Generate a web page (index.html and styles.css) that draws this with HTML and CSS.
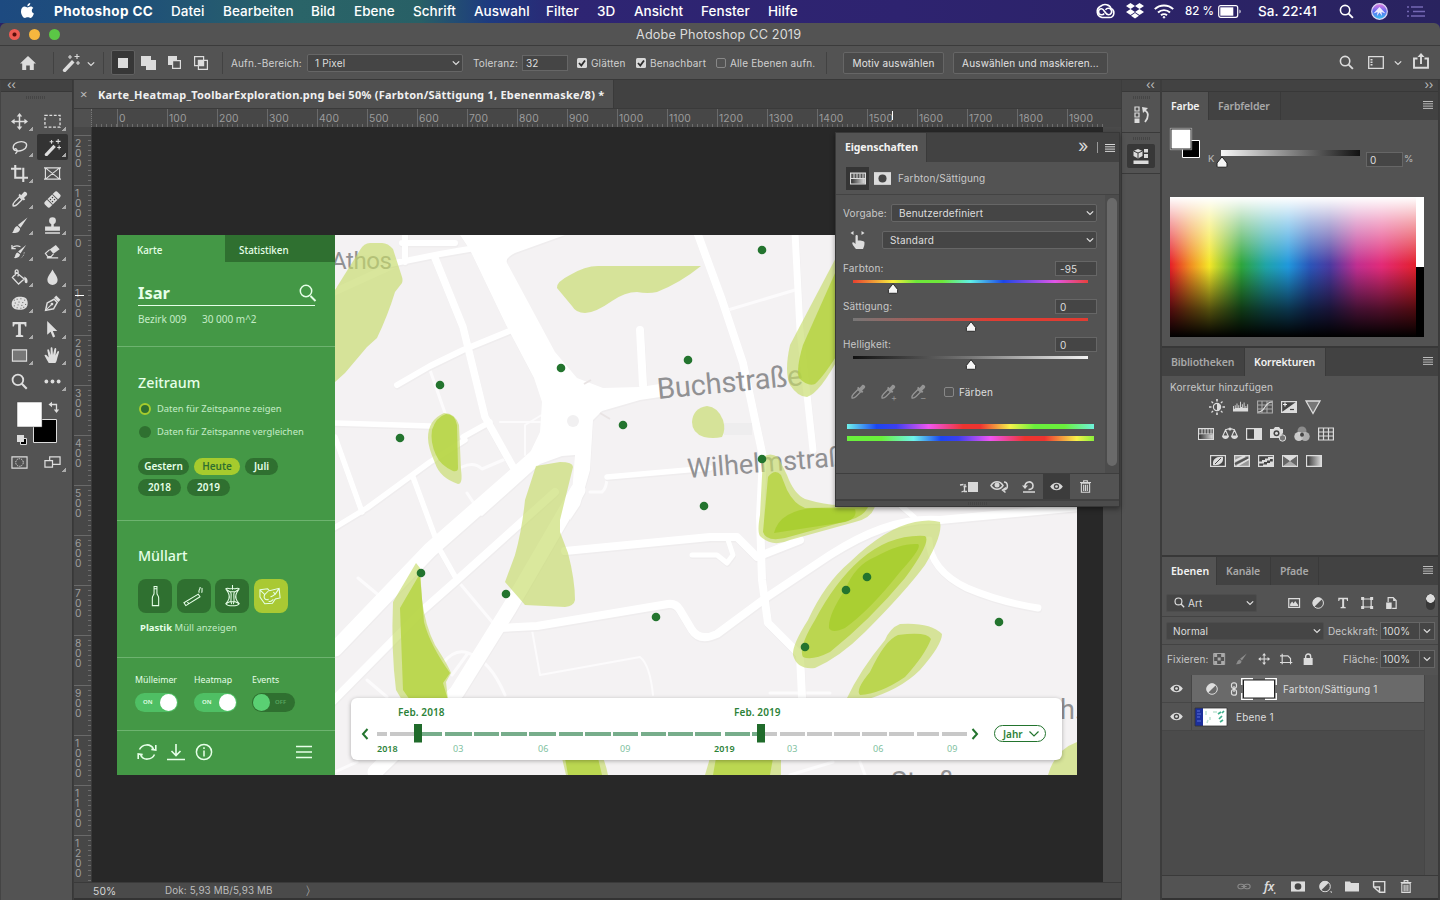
FILE: index.html
```html
<!DOCTYPE html>
<html lang="de">
<head>
<meta charset="utf-8">
<title>Adobe Photoshop CC 2019</title>
<link rel="stylesheet" href="styles.css">
</head>
<body>
<svg class="defs" aria-hidden="true">
  <defs>
    <linearGradient id="gBW" x1="0" x2="1"><stop offset="0" stop-color="#333"/><stop offset="1" stop-color="#ddd"/></linearGradient>
    <symbol id="i-chev" viewBox="0 0 8 8"><path d="M.8 2.400 4 5.400l3.200-3" fill="none" stroke="currentColor" stroke-width="1.300"/></symbol>
    <symbol id="i-menu" viewBox="0 0 10 8"><path d="M0 .5h10M0 2.800h10M0 5.100h10M0 7.400h10" stroke="currentColor" stroke-width="1"/></symbol>
    <symbol id="i-search" viewBox="0 0 16 16"><circle cx="6.500" cy="6.500" r="5" fill="none" stroke="currentColor" stroke-width="1.700"/><path d="m10.200 10.200 4.600 4.600" stroke="currentColor" stroke-width="2"/></symbol>
    <symbol id="i-move" viewBox="0 0 16 16"><path d="M8 2v12M2 8h12" stroke="currentColor" stroke-width="1.400"/><path d="m8 0 2.600 3.400H5.400zM8 16l2.600-3.400H5.400zM0 8l3.400-2.600v5.200zM16 8l-3.400-2.600v5.200z"/></symbol>
    <symbol id="i-wand" viewBox="0 0 18 18"><path d="m1 15.500 9-9.500 2.500 2.500-9 9.500c-1.500.8-3.500-1-2.500-2.500z"/><path d="M8 1v4M6 3h4M15 0v5M12.500 2.500h5M16 7v4M14 9h4" stroke="currentColor" stroke-width="1.100"/></symbol>
    <symbol id="i-marquee" viewBox="0 0 18 16"><rect x="1" y="1.500" width="16" height="12.500" fill="none" stroke="currentColor" stroke-width="1.400" stroke-dasharray="3 1.700"/></symbol>
    <symbol id="i-lasso" viewBox="0 0 18 18"><path d="M4 12c-3-2-2-7 3-8.500s10-.5 9.500 3.500-7 7-12 5c-2-1 0-2.500 1.500-1s0 3.500-1.500 4.500" fill="none" stroke="currentColor" stroke-width="1.400"/></symbol>
    <symbol id="i-crop" viewBox="0 0 18 18"><path d="M0 4h11M13 3v12M4.500 0v13.500H18M13 15v3" fill="none" stroke="currentColor" stroke-width="2.200"/></symbol>
    <symbol id="i-frame" viewBox="0 0 18 16"><path d="M1.500 2h15v12h-15zM1.500 2l15 12M16.500 2l-15 12M0 2h18M0 14h18" fill="none" stroke="currentColor" stroke-width="1.200"/></symbol>
    <symbol id="i-dropper" viewBox="0 0 16 16"><path d="M2 14c-.5-2 .5-3 1.500-4L8 5.500 10.500 8 6 12.500c-1 1-2 2-4 1.500z" fill="none" stroke="currentColor" stroke-width="1.300"/><path d="m7 4 1.300-1.300 1.200 1.200L12 1.200c1.500-1.500 4.300 1 2.800 2.800L12.200 6.500l1.200 1.200L12 9z"/></symbol>
    <symbol id="i-heal" viewBox="0 0 18 18"><g transform="rotate(-45 9 9)"><rect x="-.5" y="5" width="19" height="8" rx="2.500"/><path d="M5.200 5v8M12.800 5v8" stroke="#535353"/><circle cx="7.500" cy="7.500" r=".8" fill="#444"/><circle cx="10.500" cy="7.500" r=".8" fill="#444"/><circle cx="7.500" cy="10.500" r=".8" fill="#444"/><circle cx="10.500" cy="10.500" r=".8" fill="#444"/></g></symbol>
    <symbol id="i-brush" viewBox="0 0 16 16"><path d="M15.500.5 9 10 6.500 7.500zM6 8.500 8.500 11c0 3-3 4.500-7.500 4 2-1.500 1.500-5.500 5-6.500z"/></symbol>
    <symbol id="i-stamp" viewBox="0 0 16 16"><circle cx="8" cy="3.500" r="3.200"/><path d="M6.800 5h2.400v4H15v4H1V9h5.800zM1 14.300h14v1.400H1z"/></symbol>
    <symbol id="i-hist" viewBox="0 0 18 16"><path d="M16 1 10 10 7.500 8zM7 9l2.500 2c0 3-3 4.500-6.500 4 2-1.500 1-5 4-6z"/><path d="M1 4c4-3 7-2 9-1M1 1v4h4" fill="none" stroke="currentColor" stroke-width="1.300"/><path d="M14 9c-.5 4-2 5-4 6" fill="none" stroke="currentColor" stroke-dasharray="1 1.500"/></symbol>
    <symbol id="i-eraser" viewBox="0 0 18 16"><path d="m6 6 6.500-5 4 4.500-6.500 5z"/><path d="m6 6-4.500 4 2.500 3.500h3.500l2.500-3M3 14.800h12" fill="none" stroke="currentColor" stroke-width="1.300"/></symbol>
    <symbol id="i-bucket" viewBox="0 0 18 18"><path d="m6 4 8 6.500-6 5.500-6.500-7zM4.500 7V2.500c0-2 3-2 3 0V8" fill="none" stroke="currentColor" stroke-width="1.400"/><path d="M14 8c2.500 1 4 3 3.500 6-1 2-3 1-3-1z"/></symbol>
    <symbol id="i-drop" viewBox="0 0 16 16"><path d="M8 .5c2 4 4.800 6.500 4.800 9.800a4.800 4.800 0 0 1-9.600 0C3.200 7 6 4.500 8 .5z"/></symbol>
    <symbol id="i-sponge" viewBox="0 0 18 16"><path d="M4 2.500c2-2 8-2 11-.5s3.500 7 1.500 10-9 3.500-13 1.500S0 5 4 2.500z"/><path d="M3 4.500h1M6 3.500h1M10 3h1M14 4.500h1M4 7.500h1M8 6.500h1M12 7h1M3 10.500h1M7 9.500h1M11 10h1M15 9h1M6 12.500h1M10 13h1M13 12h1" stroke="#535353" stroke-width="1"/></symbol>
    <symbol id="i-pen" viewBox="0 0 16 16"><path d="M1.500 14.500 3 7.500 9.500 4l3 3L9 13z" fill="none" stroke="currentColor" stroke-width="1.400"/><path d="M1.500 14.500 7 9" stroke="currentColor"/><circle cx="7.500" cy="8.500" r="1.300"/><path d="m9.500 2.500 2-2 4 4-2 2z"/></symbol>
    <symbol id="i-T" viewBox="0 0 16 16"><path d="M1.500 1h13v4.200h-1.200L12.500 3H9.300v10l2.200.6V15h-7v-1.400l2.200-.6V3H3.500l-.8 2.200H1.500z"/></symbol>
    <symbol id="i-arrow" viewBox="0 0 16 16"><path d="M3 0v13l3.200-2.800L8.500 15.500l2-.9-2.200-5.100H12.500z"/></symbol>
    <symbol id="i-hand" viewBox="0 0 18 18"><path d="M5 17C3.500 14 1.500 11 .5 9c.5-1.500 2-1 3 .5L5 11 3.500 3.500C3.500 2 5 2 5.500 3.500L7 8.500 7 1.500C7-.2 9-.2 9 1.500L9.500 8.500 11 2c.5-1.300 2-1 2 .5l-.8 6.500 2-4.200c.8-1.300 2-.5 1.700.7L14 12c-.5 3-1 4-2 5z"/></symbol>
    <symbol id="i-eye" viewBox="0 0 14 10"><path d="M0 5C3.500-.7 10.500-.7 14 5c-3.500 5.700-10.500 5.700-14 0z"/><circle cx="7" cy="5" r="3" fill="#484848"/><circle cx="7" cy="5" r="1.500"/></symbol>
    <symbol id="i-trash" viewBox="0 0 12 14"><path d="M1.500 3.500h9v9.800h-9zM0 2.700h12M4 2.500V.7h4v1.800M4 5v7M6 5v7M8 5v7" fill="none" stroke="currentColor" stroke-width="1.200"/></symbol>
    <symbol id="i-half" viewBox="0 0 12 12"><circle cx="6" cy="6" r="5.300" fill="none" stroke="currentColor" stroke-width="1"/><path d="M2.200 9.800A5.300 5.300 0 1 1 9.800 2.200z"/></symbol>
    <symbol id="i-hue" viewBox="0 0 16 12"><rect x=".6" y=".6" width="14.800" height="10.800" fill="#555" stroke="currentColor" stroke-width="1.200"/><path d="M4 1v5M7 1v5M10 1v5M13 1v5M1 6h14" stroke="currentColor"/><rect x="1.200" y="6.500" width="13.600" height="4.300" fill="url(#gBW)"/></symbol>
    <symbol id="i-mask" viewBox="0 0 16 12"><path d="M0 0h16v12H0z"/><circle cx="8" cy="6" r="3.800" fill="#454545"/></symbol>
    <symbol id="i-thumb" viewBox="0 0 12 12"><path d="M6 .8 11 7v3.200a1 1 0 0 1-1 1H2a1 1 0 0 1-1-1V7z" fill="#f5f5f5" stroke="#222" stroke-width="1"/></symbol>
    <symbol id="i-check" viewBox="0 0 10 10"><rect width="10" height="10" rx="1.500" fill="#d8d8d8"/><path d="m2 5 2.300 2.500L8 2.500" fill="none" stroke="#2b2b2b" stroke-width="1.800"/></symbol>
  </defs>
</svg>

<header class="menubar">
  <svg class="apple" viewBox="0 0 14 16"><path d="M10 0c.1 2-1.400 3.600-3.200 3.500C6.700 1.700 8.300.2 10 0zM7 4.700c.9 0 1.800-.9 3.300-.9 1.300 0 2.400.7 3 1.600-2.500 1.500-2 4.900.6 5.900C13.200 13.500 11.900 16 10.300 16c-1.200 0-1.700-.7-3.100-.7-1.300 0-1.900.7-3 .7C2.200 16 0 12.200 0 9c0-3.200 1.900-5.200 4-5.200 1.300 0 2.200.9 3 .9z"/></svg>
  <nav class="menus"><b>Photoshop CC</b><span>Datei</span><span>Bearbeiten</span><span>Bild</span><span>Ebene</span><span>Schrift</span><span>Auswahl</span><span>Filter</span><span>3D</span><span>Ansicht</span><span>Fenster</span><span>Hilfe</span></nav>
  <div class="tray">
    <svg width="20" height="15" viewBox="0 0 20 15" fill="none" stroke="#fff" stroke-width="1.600"><path d="M7 13.500a6 6 0 0 1-1.500-11.200C9-1 15 .5 16 4.500c4.500 2 3.500 9-1.500 9z"/><path d="M13.500 10.800a3.300 3.300 0 1 0-3-5M6.500 10.800a3 3 0 0 1 0-6c2.800 0 3.500 6 7 6M9.200 9.500a3 3 0 0 1-2.700 1.300"/></svg>
    <svg class="tr-box" width="18" height="16" viewBox="0 0 18 16"><path d="m4.500 0 4.500 3-4.500 3L0 3zM13.500 0 18 3l-4.500 3L9 3zM4.500 6 9 9l-4.500 3L0 9zM13.500 6 18 9l-4.500 3L9 9zM9 10l4 2.700L9 15.600l-4-2.900z"/></svg>
    <svg class="tr-wifi" width="20" height="15" viewBox="0 0 20 15" fill="none" stroke="#fff" stroke-width="1.900"><path d="M.8 5.200c5-5 13.400-5 18.400 0M4 8.500c3.300-3.200 8.700-3.200 12 0M7 11.300c1.700-1.600 4.300-1.600 6 0"/><circle cx="10" cy="13.300" r=".8" fill="#fff" stroke-width="1"/></svg>
    <span class="batt">82 %</span>
    <svg width="24" height="13" viewBox="0 0 24 13"><rect x=".7" y=".7" width="19" height="11.600" rx="2" fill="none" stroke="#fff" stroke-width="1.200"/><path d="M2.300 2.300h13v8.400h-13z" fill="#fff"/><path d="M21.500 4.500v4c1.500-.5 1.500-3.500 0-4z" fill="#fff"/></svg>
    <span class="clock">Sa. 22:41</span>
    <svg class="tr-s" width="15" height="15"><use href="#i-search"/></svg>
    <svg class="tr-siri" width="17" height="17" viewBox="0 0 17 17"><defs><linearGradient id="siri" x1="0" y1="0" x2="0" y2="1"><stop offset="0" stop-color="#e77be0"/><stop offset=".5" stop-color="#5d6cf0"/><stop offset="1" stop-color="#35c8f0"/></linearGradient></defs><circle cx="8.500" cy="8.500" r="7.800" fill="url(#siri)" stroke="#dcd6f4" stroke-width="1.200"/><path d="M2.500 10.500 8.500 4l6 6.500-4-1.500.5 4-2.500-3.500L6 13l.5-4z" fill="#eef"/></svg>
    <svg class="tr-list" width="18" height="11" viewBox="0 0 18 11" stroke="#7468b4" stroke-width="1.300"><path d="M0 1h2M4 1h12M0 5.500h2M6 5.500h12M0 10h2M4 10h14"/></svg>
  </div>
</header>

<div class="window">
  <div class="titlebar"><i class="tl red"></i><i class="tl yel"></i><i class="tl grn"></i><span class="wtitle">Adobe Photoshop CC 2019</span></div>

  <div class="options">
    <svg class="o-home" viewBox="0 0 16 14"><path d="M8 0 0 7.500h2.200V14h4V9.500h3.600V14h4V7.500H16z"/></svg>
    <i class="vsep s1"></i>
    <svg class="o-wand"><use href="#i-wand"/></svg><svg class="o-wchev"><use href="#i-chev"/></svg>
    <i class="vsep s2"></i>
    <div class="o-mode"><svg width="10" height="10"><path d="M0 0h10v10H0z"/></svg></div>
    <svg class="o-m2" viewBox="0 0 15 14"><path d="M0 0h10v4h5v10H5v-4H0z"/></svg>
    <svg class="o-m3" viewBox="0 0 13 13"><path d="M0 0h9v9H0z"/><path d="M4.600 4.600h7.800v7.800H4.600z" fill="#535353" stroke="currentColor" stroke-width="1.200"/></svg>
    <svg class="o-m4" viewBox="0 0 14 14"><path d="M.6.600h9v9h-9zM4.400 4.400h9v9h-9z" fill="none" stroke="currentColor" stroke-width="1.200"/><path d="M4.400 4.400h5.200v5.200H4.400z"/></svg>
    <i class="vsep s3"></i>
    <span class="o-lab">Aufn.-Bereich:</span>
    <div class="select o-sel"><span>1 Pixel</span><svg><use href="#i-chev"/></svg></div>
    <span class="o-tol">Toleranz:</span><div class="field o-f32">32</div>
    <svg class="ck c1"><use href="#i-check"/></svg><span class="o-c1">Glätten</span>
    <svg class="ck c2"><use href="#i-check"/></svg><span class="o-c2">Benachbart</span>
    <i class="box c3"></i><span class="o-c3">Alle Ebenen aufn.</span>
    <i class="vsep s4"></i>
    <div class="btn b1">Motiv auswählen</div><div class="btn b2">Auswählen und maskieren...</div>
    <div class="o-right">
      <svg width="15" height="15"><use href="#i-search"/></svg>
      <svg class="o-lay" width="16" height="13" viewBox="0 0 16 13"><path d="M.7.700h14.600v11.600H.7z" fill="none" stroke="currentColor" stroke-width="1.300"/><path d="M2.500 3h2v1.500h-2zM2.500 5.500h2V7h-2zM2.500 8h2v1.500h-2z"/></svg>
      <svg class="o-rc" width="8" height="8"><use href="#i-chev"/></svg>
      <svg class="o-share" width="16" height="16" viewBox="0 0 16 16"><path d="M4.500 5.500H1v9.300h14V5.500h-3.500M8 11V2" fill="none" stroke="currentColor" stroke-width="1.900"/><path d="m8 0 3.500 4h-7z"/></svg>
    </div>
  </div>

  <div class="work">
    <aside class="tools">
      <div class="strip">‹‹</div>
      <i class="grip"></i>
      <div class="toolgrid">
        <i><svg><use href="#i-move"/></svg></i><i><svg><use href="#i-marquee"/></svg></i>
        <i><svg><use href="#i-lasso"/></svg></i><i class="on"><svg><use href="#i-wand"/></svg></i>
        <i><svg><use href="#i-crop"/></svg></i><i class="nt"><svg><use href="#i-frame"/></svg></i>
        <i><svg><use href="#i-dropper"/></svg></i><i><svg><use href="#i-heal"/></svg></i>
        <i><svg><use href="#i-brush"/></svg></i><i><svg><use href="#i-stamp"/></svg></i>
        <i><svg><use href="#i-hist"/></svg></i><i><svg><use href="#i-eraser"/></svg></i>
        <i><svg><use href="#i-bucket"/></svg></i><i><svg><use href="#i-drop"/></svg></i>
        <i><svg><use href="#i-sponge"/></svg></i><i><svg><use href="#i-pen"/></svg></i>
        <i><svg><use href="#i-T"/></svg></i><i><svg><use href="#i-arrow"/></svg></i>
        <i><svg viewBox="0 0 18 16"><path d="M1.500 2h15v12h-15z" fill="#777" stroke="currentColor" stroke-width="1.200"/></svg></i><i><svg><use href="#i-hand"/></svg></i>
        <i class="nt"><svg><use href="#i-search"/></svg></i><i><svg viewBox="0 0 18 16"><circle cx="2.500" cy="8" r="2"/><circle cx="9" cy="8" r="2"/><circle cx="15.500" cy="8" r="2"/></svg></i>
      </div>
      <svg class="fgbg" viewBox="0 0 72 50"><path d="M33.500 18.500h23v23h-23z" fill="#000" stroke="#ddd"/><path d="M17 1h25v25H17z" fill="#fff" stroke="#444" stroke-width=".5"/><path d="M51 3.500h5.500V10" fill="none" stroke="#ddd" stroke-width="1.300"/><path d="m48.500 3.500 3.500-2.700v5.400zM56.500 12l2.700-3.500h-5.400z" fill="#ddd"/><path d="M20.500 37.500h6v6h-6z" fill="#000" stroke="#ddd"/><path d="M17 34h7v7h-7z" fill="#ddd"/></svg>
      <div class="toolgrid last"><i class="nt"><svg viewBox="0 0 18 16"><path d="M1 2h16v12H1z" fill="none" stroke="currentColor" stroke-width="1.200"/><circle cx="9" cy="8" r="4" fill="none" stroke="currentColor" stroke-dasharray="1.500 1"/></svg></i><i><svg viewBox="0 0 18 16"><path d="M6 2h11v8H6z" fill="none" stroke="currentColor" stroke-width="1.300"/><path d="M1 6h8v7H1z" fill="#535353" stroke="currentColor" stroke-width="1.300"/></svg></i></div>
    </aside>

    <main class="doc">
      <div class="doctabs"><div class="doctab"><em>×</em><span>Karte_Heatmap_ToolbarExploration.png bei 50% (Farbton/Sättigung 1, Ebenenmaske/8) *</span></div></div>
      <div class="hruler"><i class="corner"></i><i class="pre"></i><span>0</span><span>100</span><span>200</span><span>300</span><span>400</span><span>500</span><span>600</span><span>700</span><span>800</span><span>900</span><span>1000</span><span>1100</span><span>1200</span><span>1300</span><span>1400</span><span class="mark">1500</span><span>1600</span><span>1700</span><span>1800</span><span class="lastc">1900</span></div>
      <div class="docrow">
        <div class="vruler"><i class="vpre"></i><span>200</span><span>100</span><span>0</span><span class="vmark">100</span><span>200</span><span>300</span><span>400</span><span>500</span><span>600</span><span>700</span><span>800</span><span>900</span><span>1000</span><span>1100</span><span>1200</span></div>
        <div class="canvas">
          <div class="art">
            <section class="side">
              <div class="s-tabs"><span>Karte</span><span class="stat">Statistiken</span></div>
              <div class="s-name"><b>Isar</b><svg width="18" height="18" viewBox="0 0 18 18" fill="none" stroke="#e6ffe8" stroke-width="1.500"><circle cx="7" cy="7" r="5.700"/><path d="m11.500 12 5 5" stroke-width="2"/></svg></div>
              <div class="s-info"><span>Bezirk 009</span><span>30 000 m^2</span></div>
              <div class="s-time">
                <h2>Zeitraum</h2>
                <label><i class="rad sel"></i><span>Daten für Zeitspanne zeigen</span></label>
                <label><i class="rad"></i><span>Daten für Zeitspanne vergleichen</span></label>
                <div class="pills"><b class="p1">Gestern</b><b class="p2">Heute</b><b class="p3">Juli</b><b class="p4">2018</b><b class="p5">2019</b></div>
              </div>
              <div class="s-type">
                <h2>Müllart</h2>
                <div class="tiles">
                  <i><svg viewBox="0 0 24 24"><path d="M10.500 1.500h3v7c0 2 1.800 2.500 1.800 5V21.500H8.700v-8c0-2.500 1.800-3 1.800-5zM10.500 4h3"/></svg></i>
                  <i><svg viewBox="0 0 24 24"><path d="M2 18.500 17 9.500l1.800 2.800L4 21.500zM5 16.500l2 3.200M18 8c-1.500-3 1-2.500 1-6M20.500 8c1-2 0-3 .5-5"/></svg></i>
                  <i><svg viewBox="0 0 24 24"><path d="M5 4c2-2 4 1 7-.5 3 1.500 5-1.500 7 .5l-2 3c-2 3-2 7 0 10l2 2.500c-2 3-12 3-14 0L7 17c2-3 2-7 0-10zM5 4l4 3h6l4-3M12 0v5M10 7c2 4-1 8 1 13M14 7c-2 4 1 8-1 13M5 19.500l4-2h6l4 2"/></svg></i>
                  <i class="hot"><svg viewBox="0 0 24 24"><path d="m1 5 8-1 2 2 10-2.500 1 10-5 1-3 4.500-8 .5-5-7zM1 5l5 5 4-4M21 3.500l-4 6-2-2M6 10c-2 4 1 6 4 5M10 17c3 1 3-1 5-2M12 12c2 1 3-2 5-2"/></svg></i>
                </div>
                <p><b>Plastik</b> Müll anzeigen</p>
              </div>
              <div class="s-tog">
                <div><span>Mülleimer</span><i class="tog">ON</i></div><div><span>Heatmap</span><i class="tog">ON</i></div><div><span>Events</span><i class="tog off">OFF</i></div>
              </div>
              <div class="s-foot">
                <svg width="20" height="18" viewBox="0 0 20 18" fill="none" stroke="#e6ffe8" stroke-width="1.600"><path d="M2.500 6.500C5 1 13.500 0 16.500 6M17.500 11.500C15 17 6.500 18 3.500 12M18.800 2v5l-4.500-.6M1.200 16v-5l4.500.6"/></svg>
                <svg width="20" height="18" viewBox="0 0 20 18" fill="none" stroke="#e6ffe8" stroke-width="1.600"><path d="M10 1v11M5.500 8 10 12.500 14.500 8M1 16.500h18"/></svg>
                <svg width="18" height="18" viewBox="0 0 18 18" fill="none" stroke="#e6ffe8" stroke-width="1.500"><circle cx="9" cy="9" r="7.600"/><path d="M9 7.500v6M9 4.200v1.800"/></svg>
                <svg class="burger" width="16" height="14" viewBox="0 0 16 14" stroke="#e6ffe8" stroke-width="1.500"><path d="M0 1.500h16M0 7h16M0 12.500h16"/></svg>
              </div>
            </section>
            <section class="map">
              <svg class="mapsvg" viewBox="335 235 742 540" width="742" height="540">
                <defs>
                  <g id="roads">
                    <path class="fillr" d="M460 235 470 250 506 325 534 378 542 402 540 432 528 457 470 510 482 516 540 464 562 456 575 455 570 520 580 505 590 470 593 420 602 411 640 400 660 397 660 384 640 387 603 388 577 378 555 352 507 263Q505 258 515 253L565 235Z"/>
                    <g fill="none" stroke-linecap="round" stroke-linejoin="round">
                      <path d="M538 455 430 550 335 649" stroke-width="15"/>
                      <path d="M555 492 457 580 423 610 330 704" stroke-width="8"/>
                      <path d="M578 490 510 607 457 692 375 772" stroke-width="15"/>
                      <path d="M405 235V262M402 243 455 243M390 264 440 254 475 248" stroke-width="6"/>
                      <path d="M435 258 463 327 485 417 513 467" stroke-width="7.500"/>
                      <path d="M397 385 430 366 463 350 512 330" stroke-width="6"/>
                      <path d="M335 423 430 426M463 437 490 422M335 437 362 512M334 528 367 508 430 462 465 440M413 477 440 550 457 580M607 477 710 468M900 505 915 518" stroke-width="5.500"/>
                      <path d="M692 555 717 555 727 563 733 555 728 540" stroke-width="5"/>
                      <path d="M640 330 643 385" stroke-width="8"/>
                      <path d="M697 232 722 300 743 363 763 457 760 517 762 580 768 623 800 655 802 697" stroke-width="8"/>
                      <path d="M795 232 800 330 813 450" stroke-width="7"/>
                      <path d="M565 551 710 537H737L757 557 800 540" stroke-width="8"/>
                      <path d="M500 628 537 626 668 604Q676 603 680 610L692 630Q700 642 717 634L767 597 830 555Q890 516 940 520L1080 507" stroke-width="8"/>
                      <path d="M929 540Q930 570 967 588 1000 602 1038 608" stroke-width="7"/>
                    </g>
                  </g>
                </defs>
                <path d="M335 235h742v540H335z" fill="#f4f2f3"/>
                <path d="M330 294 400 262" stroke="#fbfafb" stroke-width="7"/>
                <g fill="none" stroke="#fcfbfc" stroke-width="3" stroke-linecap="round" stroke-linejoin="round">
                  <path d="M430 370 445 413M728 310 795 290M462 467Q474 461 482 469L510 457M467 493 477 508M457 580 493 623M443 663Q455 648 468 653L452 675M468 653Q490 660 505 695M358 578 382 598M367 680 387 697M770 693H830M790 775 833 762M335 772 357 762M860 762 865 775M590 492H602Q607 488 607 476"/>
                  <path d="M532 630 540 675 640 657Q650 665 653 695M525 425 550 410M500 422H540M525 455V425" stroke-width="2"/>
                </g>
                <use href="#roads" class="r-edge"/><use href="#roads" class="r-main"/>
                <circle cx="573" cy="421" r="6" fill="#f1f0f1"/>
                <path d="m584 384 7-4M600 413l10 6" stroke="#e9e4e4" stroke-width="2"/>
                <path d="M724 423h28v12h-28z" fill="#eeedee"/>
                <g class="mlabel">
                  <text x="331" y="269" font-size="24" textLength="61">Athos</text>
                  <text x="0" y="0" font-size="29" textLength="146" transform="translate(658 399) rotate(-5.500)">Buchstraße</text>
                  <text x="0" y="0" font-size="27" textLength="172" transform="translate(688 478) rotate(-4.500)">Wilhelmstraße</text>
                  <text x="1060" y="719" font-size="27">h.</text>
                  <text x="891" y="791" font-size="27">Straß</text>
                </g>
                <g class="b1c">
                  <path d="M335 382 345 373 367 347 377 338Q388 315 395 292L402 283Q403 280 402 277L393 249Q388 243 382 243H370Q364 243 360 250L335 290Z"/>
                  <path d="M557 288Q556 282 570 275 585 266 598 266H701Q680 283 657 292 648 294 637 292 625 292 612 301 595 313 585 313 576 313 572 306Z"/>
                  <path d="M444 413Q455 413 459 425L461 470Q463 484 458 484 440 478 435 463 428 447 428 438 428 420 444 413Z"/>
                  <path d="M536 466 560 462Q573 462 573 467L560 520V532L568 553Q575 580 575 600 574 606 565 607L525 605 519 598 505 582 515 555Q522 530 525 500Z"/>
                  <path d="M840 250 790 345Q784 372 790 385 798 397 807 397 820 393 840 355Z"/>
                  <path d="M692 422Q693 408 707 406 718 407 723 420 726 430 722 437 713 439 704 437 692 433 692 422Z"/>
                  <path d="M763 457Q770 452 778 457L787 475Q794 494 805 499 825 505 840 505L875 506Q872 518 855 522L790 540Q772 548 760 536 757 532 760 515Z"/>
                  <path d="M940 522Q943 535 925 565 905 592 865 632 840 657 815 668 797 670 793 655 792 645 808 620 825 583 850 562 885 528 915 522 930 519 940 522Z"/>
                  <path d="M900 624Q930 622 942 634 942 645 920 670 900 690 865 700L846 700Q860 670 885 640 890 628 900 624Z"/>
                  <path d="M416 563 393 602Q391 650 396 690L402 700H448L446 682 451 673Q448 665 435 645 425 625 422 600L420 568Z"/>
                  <path d="M562 758 566 775H608Q606 765 603 758ZM705 775 710 758H781V775ZM1048 775Q1055 750 1077 742V775Z"/>
                </g>
                <g class="b2c">
                  <path d="M446 414Q455 414 457 425L458 468Q458 472 453 471 440 465 436 455 430 442 432 430 436 417 446 414Z"/>
                  <path d="M840 262 803 345Q796 368 799 378 808 387 815 384 825 375 840 350Z"/>
                  <path d="M768 477Q775 468 781 475L787 490Q794 504 805 508L868 507Q864 516 850 520L785 538Q766 542 763 532Z"/>
                  <path d="M925 536Q932 541 905 578 870 620 830 652 812 661 803 657 798 648 815 620 835 582 860 560 890 534 925 536Z"/>
                  <path d="M898 635Q927 631 931 639 925 655 905 677 880 694 860 695 855 690 870 672 885 640 898 635Z"/>
                  <path d="M418 577 400 608 403 690 410 700H448L443 683 450 673Q430 645 424 622L420 575Z"/>
                  <path d="M565 758 568 775H602L598 758ZM713 775 716 758H773L770 775Z"/>
                </g>
                <g class="b3c">
                  <path d="M774 533Q780 510 815 508L855 509Q858 518 845 522Z"/>
                  <path d="M918 544Q923 547 900 572 870 610 845 628 832 634 829 628 828 615 845 590 855 565 875 557 900 543 918 544Z"/>
                </g>
                <g fill="#23742e"><circle cx="762" cy="250" r="4.300"/><circle cx="688" cy="360" r="4.300"/><circle cx="561" cy="368" r="4.300"/><circle cx="440" cy="385" r="4.300"/><circle cx="400" cy="438" r="4.300"/><circle cx="623" cy="425" r="4.300"/><circle cx="762" cy="459" r="4.300"/><circle cx="704" cy="506" r="4.300"/><circle cx="421" cy="573" r="4.300"/><circle cx="506" cy="594" r="4.300"/><circle cx="656" cy="617" r="4.300"/><circle cx="867" cy="577" r="4.300"/><circle cx="846" cy="590" r="4.300"/><circle cx="805" cy="647" r="4.300"/><circle cx="999" cy="622" r="4.300"/></g>
              </svg>
              <div class="timeline">
                <div class="t-top"><span>Feb. 2018</span><span>Feb. 2019</span></div>
                <div class="t-mid">
                  <svg width="8" height="12" viewBox="0 0 8 12"><path d="M6.500 1 2 6l4.500 5" fill="none" stroke="#23742e" stroke-width="2"/></svg>
                  <svg class="track" width="591" height="20" viewBox="377 0 591 20">
                    <path d="M377 10h10M390 10h25M761 10h16M780 10h25M807 10h25M834 10h26M862 10h25M889 10h25M917 10h22M942 10h25" stroke="#c8c8c8" stroke-width="4"/>
                    <path d="M420 10h22M445 10h27M474 10h25M501 10h26M529 10h27M559 10h24M585 10h26M613 10h25M641 10h25M668 10h25M695 10h26M725 10h25M752 10h9" stroke="#77ad8b" stroke-width="4"/>
                    <path d="M414 0h8v18.500h-8zM757 0h8v18.500h-8z" fill="#206b2b"/>
                  </svg>
                  <svg class="t-next" width="8" height="12" viewBox="0 0 8 12"><path d="M1.500 1 6 6l-4.500 5" fill="none" stroke="#23742e" stroke-width="2"/></svg>
                  <div class="jahr"><span>Jahr</span><svg width="10" height="6" viewBox="0 0 10 6"><path d="m.5.500 4.500 4.500L9.500.500" fill="none" stroke="#23742e" stroke-width="1.200"/></svg></div>
                </div>
                <div class="t-bot"><b>2018</b><span>03</span><span>06</span><span>09</span><b>2019</b><span>03</span><span>06</span><span>09</span></div>
              </div>
            </section>
          </div>
        </div>
        <div class="vscroll"></div>
      </div>
      <div class="status"><span class="z">50%</span><span class="dok">Dok: 5,93 MB/5,93 MB</span><span class="ar">〉</span></div>

      <section class="props">
        <div class="ptabs"><b class="cur">Eigenschaften</b><div class="ptools"><span>»</span><i></i><svg width="10" height="8"><use href="#i-menu"/></svg></div></div>
        <div class="phead"><div class="picon"><svg width="16" height="13"><use href="#i-hue"/></svg></div><svg width="17" height="13"><use href="#i-mask"/></svg><span>Farbton/Sättigung</span></div>
        <div class="pbody">
          <div class="pform">
            <div class="prow r1"><label>Vorgabe:</label><div class="select"><span>Benutzerdefiniert</span><svg><use href="#i-chev"/></svg></div></div>
            <div class="prow r2"><svg width="17" height="19" viewBox="0 0 17 19"><path d="M5.500 17.500C4 15.500 1.500 12.500 2.500 11.500c1-.8 2 .5 3 1.500V5c0-1.500 2.300-1.500 2.300 0v4.500c3.500 0 6.700.5 6.700 2 0 3-.5 4-1.500 6.500H6z"/><path d="M3.500 0v4L.5 2zM11.500 0v4L14.500 2z"/></svg><div class="select"><span>Standard</span><svg><use href="#i-chev"/></svg></div></div>
            <div class="sl"><label>Farbton:</label><div class="field">-95</div></div>
            <div class="bar hue"><svg style="left:34px"><use href="#i-thumb"/></svg></div>
            <div class="sl"><label>Sättigung:</label><div class="field">0</div></div>
            <div class="bar sat"><svg style="left:112px"><use href="#i-thumb"/></svg></div>
            <div class="sl"><label>Helligkeit:</label><div class="field">0</div></div>
            <div class="bar lum"><svg style="left:112px"><use href="#i-thumb"/></svg></div>
            <div class="drops"><svg><use href="#i-dropper"/></svg><div><svg><use href="#i-dropper"/></svg><sub>+</sub></div><div><svg><use href="#i-dropper"/></svg><sub>–</sub></div><i class="box"></i><span>Färben</span></div>
            <i class="spec sp1"></i><i class="spec sp2"></i>
          </div>
          <div class="pscroll"><i></i></div>
        </div>
        <div class="pfoot">
          <svg width="18" height="12" viewBox="0 0 18 12"><path d="M8 1h10v10H8z"/><path d="m0 4 3.500-.5M5 3v3M6.500 5.500h-3M4.500 5.500v5h2.500M4 10l-2.500 1" fill="none" stroke="currentColor" stroke-width="1.300"/></svg>
          <svg width="19" height="13" viewBox="0 0 19 13"><path d="M1 5.500c3-5 9-5 12 0-3 5-9 5-12 0z" fill="none" stroke="currentColor" stroke-width="1.500"/><circle cx="7" cy="5" r="2.500"/><path d="M14 2c4 0 5 7 0 8M16 7.500 12.500 10l3 2.500" fill="none" stroke="currentColor" stroke-width="1.500"/></svg>
          <svg width="14" height="13" viewBox="0 0 14 13"><path d="M3 7C2 1 11 0 11 5.500c0 3-2 4-4.500 4M1 12h12" fill="none" stroke="currentColor" stroke-width="1.600"/><path d="M0 5.500h6L3 9z"/></svg>
          <div class="pon"><svg width="13" height="9"><use href="#i-eye"/></svg></div>
          <svg width="11" height="13"><use href="#i-trash"/></svg>
        </div>
        <div class="pgrip"><i class="grip"></i></div>
      </section>
    </main>

    <aside class="dock">
      <div class="strip">‹‹</div>
      <div class="dk"><i class="grip"></i><svg width="16" height="18" viewBox="0 0 16 18"><path d="M1 1h4v4H1zM1 7h4v4H1z" fill="none" stroke="currentColor" stroke-width="1.200"/><path d="M.5 12.500h5V17h-5zM8 1l6 1-5 5z"/><path d="M10 4c5 2 5 7 1 12" fill="none" stroke="currentColor" stroke-width="1.800"/></svg></div>
      <div class="dk"><i class="grip"></i><div class="dk-on"><svg width="16" height="17" viewBox="0 0 16 17"><path d="m5 1 4.500 2v5L5 10.500.5 8V3z"/><path d="m.5 3 4.500 2 4.500-2M5 5v5" fill="none" stroke="#383838"/><path d="M11 1h4v3.500h-4zM11 6h4v4h-4zM.5 12.500h15V16H.5z"/></svg></div></div>
      <div class="dk-rest"></div>
    </aside>

    <aside class="panels">
      <div class="strip r">››</div>
      <div class="tabs t-farbe"><b class="cur">Farbe</b><b>Farbfelder</b><svg><use href="#i-menu"/></svg></div>
      <div class="farbe">
        <div class="frow">
          <svg width="32" height="32" viewBox="0 0 32 32"><path d="M12.500 12.500h17v17h-17z" fill="#000" stroke="#fff"/><path d="M1 1h20v20H1z" fill="#fff" stroke="#222"/><path d="M.3.300h21.400v21.400H.3z" fill="none" stroke="#ccc" stroke-width=".6"/></svg>
          <span class="k">K</span><div class="kbar"><svg><use href="#i-thumb"/></svg></div><div class="field">0</div><span class="pc">%</span>
        </div>
        <div class="spectrum"><i></i><u></u></div>
      </div>
      <div class="tabs t-korr"><b>Bibliotheken</b><b class="cur">Korrekturen</b><svg><use href="#i-menu"/></svg></div>
      <div class="korr">
        <p>Korrektur hinzufügen</p>
        <div class="kr k1">
          <svg viewBox="0 0 16 16"><circle cx="8" cy="8" r="3.600" fill="none" stroke="currentColor" stroke-width="1.200"/><path d="M8 4.400a3.600 3.600 0 0 1 0 7.200zM7.200 0h1.600v2.500H7.200zM7.200 13.500h1.600V16H7.200zM0 7.200h2.500v1.600H0zM13.500 7.200H16v1.600h-2.500z"/><path d="m2.500 2.500 1.600 1.600M13.500 2.500l-1.600 1.600M2.500 13.500l1.600-1.600M13.500 13.500l-1.600-1.600" stroke="currentColor" stroke-width="1.300"/></svg>
          <svg viewBox="0 0 18 16"><path d="M0 13V7h1v3h1V6h1v3h1V4h1v5h1V6h1v3h1V2h1v6h1V5h1v4h1V3h1v6h1V7h1v2h1V5h1v8z"/></svg>
          <svg viewBox="0 0 16 16"><path d="M.6 2h14.800v12H.6zM.6 6h15M.6 10h15M5 2v12M10 2v12" fill="none" stroke="#aaa" stroke-width="1.100"/><path d="M1 13C9 13 7 3 15 3" fill="none" stroke="currentColor" stroke-width="1.200"/></svg>
          <svg viewBox="0 0 16 16"><path d="M.6 2.600h14.800v10.800H.6z" fill="#444" stroke="currentColor" stroke-width="1.200"/><path d="M15 3v10H1z"/><path d="M2 5.500h4M4 3.500v4" stroke="#eee" stroke-width="1.200"/><path d="M9 10.500h4" stroke="#444" stroke-width="1.200"/></svg>
          <svg viewBox="0 0 16 16"><path d="M1 2h14L8 14.500z" fill="#777" stroke="currentColor" stroke-width="1.300"/></svg>
        </div>
        <div class="kr k2">
          <svg viewBox="0 0 16 12"><use href="#i-hue"/></svg>
          <svg viewBox="0 0 16 16"><path d="M3.500 4Q8 1.500 12.500 4M3.500 4 .8 10h5.400zM12.500 4 9.800 10h5.400z" fill="none" stroke="currentColor" stroke-width="1.100"/><path d="M0 10h7c-.5 4-6.500 4-7 0zM9 10h7c-.5 4-6.500 4-7 0z"/><circle cx="8" cy="3" r="1.600"/></svg>
          <svg viewBox="0 0 16 16"><path d="M.6 2.600h14.800v10.800H.6z" fill="#444" stroke="currentColor" stroke-width="1.200"/><path d="M8 3h7v10H8z"/></svg>
          <svg viewBox="0 0 16 16"><path d="M0 3h3.500L5 1h4l1.500 2H13v4L9 12H0z"/><circle cx="6.500" cy="7.300" r="3" fill="#444"/><circle cx="6.500" cy="7.300" r="1.500"/><circle cx="12.500" cy="12" r="3.200" fill="#777" stroke="currentColor"/></svg>
          <svg viewBox="0 0 16 16"><circle cx="8" cy="5" r="4.500" fill="#8c8c8c"/><circle cx="4.800" cy="10.500" r="4.500" fill="#e0e0e0" opacity=".85"/><circle cx="11.200" cy="10.500" r="4.500" fill="#bbb" opacity=".85"/><circle cx="8" cy="8.700" r="2" fill="#444"/></svg>
          <svg viewBox="0 0 16 16"><path d="M.6 2h14.800v12H.6zM.6 6h15M.6 10h15M5.500 2v12M10.500 2v12" fill="none" stroke="currentColor" stroke-width="1.200"/></svg>
        </div>
        <div class="kr k3">
          <svg viewBox="0 0 16 16"><path d="M.6 2.600h14.800v10.800H.6z" fill="#444" stroke="currentColor" stroke-width="1.200"/><path d="M3 12C2 6 7 3 13 4c1 6-4 9-10 8z"/><path d="m5 11 6-6" stroke="#444"/></svg>
          <svg viewBox="0 0 16 16"><path d="M.6 2.600h14.800v10.800H.6z" fill="#999" stroke="currentColor" stroke-width="1.200"/><path d="M1 8 11 3M3 13l12-7" stroke="#e0e0e0" stroke-width="2"/><path d="M1 11 14 4.500" stroke="#555" stroke-width="2"/></svg>
          <svg viewBox="0 0 16 16"><path d="M.6 2.600h14.800v10.800H.6z" fill="#444" stroke="currentColor" stroke-width="1.200"/><path d="M1 8.500h3V7h3V5.500h3V4h5v2h-3v1.500H9V9H6v1.500H1zM5 13v-1.500h4V10h3V8.500h3V13z"/></svg>
          <svg viewBox="0 0 16 16"><path d="M.6 2.600h14.800v10.800H.6z" fill="#aaa" stroke="currentColor" stroke-width="1.200"/><path d="m1 3 7 5-7 5zM15 3 8 8l7 5z" fill="#666"/><path d="M1 3h14L8 8z"/></svg>
          <svg viewBox="0 0 16 16"><path d="M.6 2.600h14.800v10.800H.6z" fill="url(#gBW)" stroke="currentColor" stroke-width="1.200"/></svg>
        </div>
      </div>
      <div class="tabs t-eb"><b class="cur">Ebenen</b><b>Kanäle</b><b>Pfade</b><svg><use href="#i-menu"/></svg></div>
      <div class="l-filter">
        <div class="select art-s"><svg class="mg"><use href="#i-search"/></svg><span>Art</span><svg><use href="#i-chev"/></svg></div>
        <div class="l-ic">
          <svg viewBox="0 0 12 12"><path d="M.6 1.600h10.800v8.800H.6z" fill="none" stroke="currentColor" stroke-width="1.200"/><path d="M2 9V7l2-2.500 1.500 2L7 4l3 4v1z"/></svg>
          <svg><use href="#i-half"/></svg><svg><use href="#i-T"/></svg>
          <svg viewBox="0 0 12 12"><path d="M2 2h8v8H2z" fill="none" stroke="currentColor" stroke-width="1.200"/><path d="M0 0h3v3H0zM9 0h3v3H9zM0 9h3v3H0zM9 9h3v3H9z"/></svg>
          <svg viewBox="0 0 12 12"><path d="M3 5V.6h5L11 3.500v7.900H7" fill="none" stroke="currentColor" stroke-width="1.200"/><path d="M8 .5V4h3zM1 5.500h5.500V12H1z"/></svg>
        </div>
        <i class="sw"></i>
      </div>
      <div class="l-mode"><div class="select nm"><span>Normal</span><svg><use href="#i-chev"/></svg></div><span class="dk1">Deckkraft:</span><div class="combo"><span>100%</span><u><svg><use href="#i-chev"/></svg></u></div></div>
      <div class="l-fix"><span class="fx">Fixieren:</span>
        <div class="l-lk">
          <svg viewBox="0 0 12 12"><path d="M.5.500h11v11H.5z" fill="none" stroke="#aaa"/><path d="M1 1h3v3H1zM8 1h3v3H8zM4.500 4.500h3v3h-3zM1 8h3v3H1zM8 8h3v3H8z" fill="#aaa"/></svg>
          <svg class="dim" viewBox="0 0 16 16"><use href="#i-brush"/></svg><svg viewBox="0 0 16 16"><use href="#i-move"/></svg>
          <svg viewBox="0 0 14 12"><path d="M2.500 0v12M0 2.500h9l3 3V12M0 10h14" fill="none" stroke="currentColor" stroke-width="1.300"/></svg>
          <svg viewBox="0 0 12 12"><path d="M1.500 5h9v7h-9z"/><path d="M3.500 5V3.500a2.500 2.500 0 0 1 5 0V5" fill="none" stroke="currentColor" stroke-width="1.400"/></svg>
        </div>
        <span class="fl">Fläche:</span><div class="combo"><span>100%</span><u><svg><use href="#i-chev"/></svg></u></div></div>
      <div class="layers">
        <div class="list">
          <div class="layer"><div class="eye"><svg width="13" height="9"><use href="#i-eye"/></svg></div><div class="lr sel"><svg class="hf"><use href="#i-half"/></svg><svg class="lnk" viewBox="0 0 7 14"><rect x="1" y=".8" width="5" height="5.500" rx="2" fill="none" stroke="currentColor" stroke-width="1.200"/><rect x="1" y="7.700" width="5" height="5.500" rx="2" fill="none" stroke="currentColor" stroke-width="1.200"/><path d="M3.500 4v6" stroke="currentColor" stroke-width="1.200"/></svg><svg class="mk" viewBox="0 0 36 22"><path d="M2.500 2h31v18h-31z" fill="#fff" stroke="#222"/><path d="M.7 7V.700H12M24 .700h11.300V7M35.300 15v6.300H24M12 21.300H.7V15" fill="none" stroke="#fff" stroke-width="1.300"/></svg><span>Farbton/Sättigung 1</span></div></div>
          <div class="layer"><div class="eye"><svg width="13" height="9"><use href="#i-eye"/></svg></div><div class="lr"><svg class="tn" viewBox="0 0 32 18"><path d="M0 0h32v18H0z" fill="#fff"/><path d="M0 0h8v18H0z" fill="#1c2f9c"/><path d="M2 3h3M2 6h4M2 9h3M2 13h4" stroke="#5a70d8"/><path d="M11 3v4M13 12l-1 3M18 4h4M15 9v3" stroke="#bfe3d2" stroke-width="1.500"/><path d="m23 6 3-2M27 5l2-2M24 11l3-3M25 14l3-2" stroke="#3fae8c" stroke-width="1.700"/><path d="M0 0h32v18H0z" fill="none" stroke="#333" stroke-width=".8"/></svg><span>Ebene 1</span></div></div>
        </div>
        <div class="lscroll"></div>
      </div>
      <div class="l-foot">
        <svg class="dim" viewBox="0 0 16 12"><rect x="1" y="3.500" width="7" height="5" rx="2.500" fill="none" stroke="currentColor" stroke-width="1.200"/><rect x="8" y="3.500" width="7" height="5" rx="2.500" fill="none" stroke="currentColor" stroke-width="1.200"/><path d="M5 6h6" stroke="currentColor" stroke-width="1.200"/></svg>
        <em>fx<sub>.</sub></em>
        <svg viewBox="0 0 16 12"><use href="#i-mask"/></svg>
        <svg viewBox="0 0 14 12"><use href="#i-half"/><path d="M11.500 11h2.500v1.500z"/></svg>
        <svg viewBox="0 0 14 12"><path d="M0 1h5l1 1.500h8V11H0z"/></svg>
        <svg viewBox="0 0 12 12"><path d="M1 1.500h10.300v9.800H6.500L1 6.500zM1 6.500h5.500v5" fill="none" stroke="currentColor" stroke-width="1.300"/></svg>
        <svg viewBox="0 0 12 14"><use href="#i-trash"/></svg>
      </div>
    </aside>
  </div>
</div>
</body>
</html>
```

FILE: styles.css
```css
* { box-sizing: border-box; }
body { margin: 0; width: 1440px; height: 900px; overflow: hidden; background: #2a2366; font: 10px/14px Inter, "Liberation Sans", sans-serif; letter-spacing: .15px; color: #d6d6d6; }
i, em, u { font-style: normal; text-decoration: none; }
i, u { display: block; }
svg { display: block; flex: none; fill: currentColor; overflow: visible; }
svg[fill="none"] { fill: none; }
.defs { position: absolute; width: 0; height: 0; }
span, b, label { white-space: nowrap; }

/* system menu bar */
.menubar { height: 23px; display: flex; align-items: center; color: #fff; background: linear-gradient(90deg, #1d4a80 0, #1f5078 140px, #2a6468 300px, #286066 420px, #1d3a80 490px, #2e2573 570px, #2e2370 900px, #29235f 1440px); font-size: 13.500px; font-weight: 500; letter-spacing: 0; }
.apple { width: 13px; height: 15px; margin-left: 21px; margin-top: -2px; }
.menus { display: flex; margin-left: 20px; width: 760px; margin-top: -2px; letter-spacing: .05px; }
.menus > * { flex: none; width: 60px; }
.menus b { width: 117px; font-weight: 700; letter-spacing: .4px; }
.menus :nth-child(2) { width: 52px; }
.menus :nth-child(3) { width: 88px; }
.menus :nth-child(4) { width: 43px; }
.menus :nth-child(5) { width: 59px; }
.menus :nth-child(6) { width: 61px; }
.menus :nth-child(7) { width: 72px; }
.menus :nth-child(8) { width: 51px; }
.menus :nth-child(9) { width: 37px; }
.menus :nth-child(10) { width: 67px; }
.menus :nth-child(11) { width: 67px; }
.tray { margin-left: auto; width: 345px; display: flex; align-items: center; margin-top: -1px; }
.tr-box { margin-left: 11px; }
.tr-wifi { margin-left: 10px; margin-right: 11px; }
.batt { width: 33px; font-size: 11.500px; }
.clock { margin-left: 16px; width: 81px; }
.tr-siri { margin-left: 17px; margin-right: 19px; }

/* window */
.window { height: 877px; background: #535353; border-radius: 6px 6px 0 0; display: flex; flex-direction: column; }
.titlebar { height: 23px; display: flex; align-items: center; padding-left: 9px; gap: 9px; border-bottom: 1px solid #3b3b3b; }
.tl { width: 11px; height: 11px; border-radius: 50%; }
.red { background: radial-gradient(circle, #5a0d0a 0 1.500px, #ee5a52 2.500px); }
.yel { background: #f6b73e; }
.grn { background: #5bc746; }
.wtitle { margin-left: 567px; font-size: 12.700px; margin-top: 2px; color: #dcdcdc; letter-spacing: .15px; }

/* options bar */
.options { height: 33px; display: flex; align-items: center; color: #dcdcdc; }
.options > * { flex: none; }
.options > span { color: #d0d0d0; }
.vsep { width: 1px; height: 22px; background: #424242; }
.o-home { width: 16px; height: 14px; margin-left: 20px; }
.s1 { margin-left: 17px; }
.o-wand { width: 18px; height: 18px; margin-left: 8px; }
.o-wchev { width: 8px; height: 8px; margin-left: 7px; margin-top: 2px; }
.s2 { margin-left: 8px; }
.o-mode { width: 24px; height: 25px; background: #373737; margin-left: 7px; display: grid; place-items: center; border: 1px solid #616161; border-radius: 2px; }
.o-m2 { width: 15px; height: 14px; margin-left: 6px; }
.o-m3 { width: 13px; height: 13px; margin-left: 12px; }
.o-m4 { width: 14px; height: 14px; margin-left: 13px; }
.s3 { margin-left: 14px; }
.o-lab { margin-left: 8px; width: 76px; }
.select { display: flex; align-items: center; height: 18px; background: #454545; border: 1px solid #666; border-radius: 2px; padding: 0 2px 0 7px; color: #dedede; }
.select > svg { width: 8px; height: 8px; margin-left: auto; }
.select span { flex: none; }
.o-sel { width: 156px; }
.o-tol { margin-left: 10px; width: 49px; }
.field { height: 15px; line-height: 14px; background: #454545; border: 1px solid #666; padding-left: 3px; color: #dedede; }
.o-f32 { width: 46px; height: 16px; }
.ck { width: 10px; height: 10px; }
.box { width: 10px; height: 10px; border: 1px solid #888; border-radius: 2px; }
.c1 { margin-left: 9px; }
.o-c1 { margin-left: 4px; width: 35px; }
.c2 { margin-left: 10px; }
.o-c2 { margin-left: 4px; width: 56px; }
.c3 { margin-left: 10px; }
.o-c3 { margin-left: 4px; width: 85px; }
.s4 { margin-left: 11px; }
.btn { height: 22px; line-height: 20px; text-align: center; border: 1px solid #666; background: #4a4a4a; border-radius: 2px; color: #e2e2e2; white-space: nowrap; }
.b1 { width: 101px; margin-left: 16px; }
.b2 { width: 155px; margin-left: 9px; }
.o-right { margin-left: auto; width: 101px; display: flex; align-items: center; }
.o-lay { margin-left: 14px; }
.o-rc { margin-left: 10px; }
.o-share { margin-left: 11px; margin-top: -3px; }

.work { flex: 1; display: flex; min-height: 0; border-top: 1px solid #383838; background: #3c3c3c; position: relative; }
.work > * { flex: none; }
.strip { height: 12px; line-height: 9px; background: #424242; font-size: 12px; color: #bcbcbc; padding-left: 6px; border-bottom: 1px solid #383838; letter-spacing: -.3px; }
.grip { width: 20px; height: 3px; background: repeating-linear-gradient(90deg, #454545 0 1px, transparent 1px 2px); margin: 4px auto 0; }

/* toolbar */
.tools { width: 73px; background: #535353; border-left: 1px solid #444; border-right: 1px solid #383838; }
.toolgrid { display: grid; grid-template-columns: 33px 33px; grid-auto-rows: 26px; margin: 9px 0 0 2px; }
.tools .grip { margin-left: 25px; }
.toolgrid i { display: grid; place-items: center; color: #dedede; background: linear-gradient(135deg, transparent 50%, #aaa 50%) no-repeat 26px 19px / 4px 4px; }
.toolgrid i.nt { background: none; }
.toolgrid i.on { background-color: #333; border-radius: 2px; margin-right: 1px; margin-left: 1px; background-position: 25px 19px; }
.toolgrid svg { width: 17px; height: 17px; }
.fgbg { width: 72px; height: 50px; margin-left: -1px; margin-top: 7px; }
.toolgrid.last { margin-top: -2px; }

/* document */
.doc { width: 1047px; margin-left: 1px; position: relative; display: flex; flex-direction: column; background: #4a4a4a; }
.doctabs { height: 28px; background: #414141; display: flex; }
.doctab { width: 540px; background: #505050; border-right: 1px solid #3a3a3a; display: flex; align-items: center; font: bold 11px "Noto Sans", sans-serif; color: #f0f0f0; letter-spacing: .24px; padding-left: 6px; }
.doctab em { font-size: 13px; color: #bbb; width: 18px; font-weight: 400; }
.hruler { height: 19px; display: flex; background: #474747; border-top: 1px solid #3a3a3a; color: #9c9c9c; font-size: 10.300px; line-height: 19px; }
.corner { width: 18px; background: #505050; border-right: 1px dotted #777; }
.hruler > * { flex: none; }
.pre { width: 25px; }
.hruler span { width: 50px; border-left: 1px solid #6a6a6a; padding-left: 1px; background: repeating-linear-gradient(90deg, transparent 0 4px, #6c6c6c 4px 5px) bottom / 100% 3px no-repeat; position: relative; }
.hruler .pre { background: repeating-linear-gradient(90deg, transparent 0 4px, #6c6c6c 4px 5px) bottom / 100% 3px no-repeat; }
.hruler .lastc { width: 36px; }
.mark::after { content: ""; position: absolute; left: 24px; top: 2px; width: 1px; height: 9px; background: #fff; }
.docrow { height: 755px; display: flex; }
.vruler { width: 18px; background: #474747; color: #9c9c9c; font-size: 10.300px; line-height: 10px; overflow: hidden; border-right: 1px solid #3a3a3a; }
.vpre { height: 8px; }
.vruler span { display: block; width: 17px; height: 50px; border-top: 1px solid #6a6a6a; padding: 2px 9px 0 1px; white-space: normal; word-break: break-all; letter-spacing: 0; position: relative; background: repeating-linear-gradient(180deg, transparent 0 4px, #6c6c6c 4px 5px) right / 3px 100% no-repeat; }
.vmark::after { content: ""; position: absolute; left: 1px; top: 9px; width: 9px; height: 1px; background: #fff; }
.canvas { width: 1011px; background: #282828; padding: 108px 0 0 25px; }
.art { width: 960px; height: 540px; display: flex; overflow: hidden; }
.vscroll { width: 18px; background: #4a4a4a; }
.status { flex: 1; background: #4a4a4a; border-top: 1px solid #3a3a3a; border-bottom: 2px solid #333; display: flex; align-items: center; }
.z { margin-left: 19px; width: 72px; font-size: 10.300px; }
.dok { width: 140px; color: #bdbdbd; font-size: 9.800px; }
.ar { font-size: 12px; }

/* artwork: sidebar */
.side { width: 218px; background: #449846; color: #e6ffe8; font: 10px/14px "Noto Sans", sans-serif; letter-spacing: 0; display: flex; flex-direction: column; flex: none; }
.s-tabs { height: 27px; display: flex; line-height: 31px; font-weight: 500; padding-left: 20px; font-size: 9.800px; }
.s-tabs span { width: 88px; }
.s-tabs .stat { width: 110px; background: #2f7030; padding-left: 14px; }
.s-name { margin: 18px 20px 0 21px; height: 26px; border-bottom: 1px solid #e6ffe8; display: flex; justify-content: space-between; align-items: flex-start; }
.s-name b { font-size: 16.500px; line-height: 25px; font-weight: 700; }
.s-name svg { margin-top: 4px; margin-right: -2px; }
.s-info { margin: 6px 0 0 21px; display: flex; height: 34px; color: #c4ecc6; }
.s-info span { width: 64px; }
.s-time { border-top: 1px solid #6db36f; height: 174px; padding: 25px 0 0 21px; }
.side h2 { margin: 0; font-size: 14.300px; line-height: 22px; font-weight: 500; }
.s-time label { display: flex; align-items: center; height: 23px; color: #c4ecc6; font-size: 9.400px; }
.s-time h2 + label { margin-top: 3px; }
.rad { width: 12px; height: 12px; border-radius: 50%; background: #2f7030; margin: 0 6px 0 1px; }
.rad.sel { border: 2.500px solid #a6cb2d; }
.pills { display: flex; flex-wrap: wrap; margin-top: 15px; gap: 4px 5px; }
.pills b { height: 17px; line-height: 17px; border-radius: 9px; background: #2f7030; text-align: center; font-weight: 600; }
.pills .p1 { width: 51px; } .pills .p2 { width: 46px; background: #a6cb2d; color: #2f7030; } .pills .p3 { width: 33px; margin-right: 30px; }
.pills .p4, .pills .p5 { width: 43px; } .pills .p5 { margin-left: 1px; }
.s-type { border-top: 1px solid #6db36f; height: 137px; padding: 24px 0 0 21px; }
.tiles { display: flex; gap: 4.500px; margin-top: 12px; }
.tiles i { width: 34px; height: 34px; border-radius: 8px; background: #2f7030; display: grid; place-items: center; }
.tiles .hot { background: #a9c933; }
.tiles svg { width: 23px; height: 23px; fill: none; stroke: #e6ffe8; stroke-width: 1.100; }
.s-type p { margin: 8px 0 0 2px; color: #c4ecc6; font-size: 9.500px; }
.s-type p b { color: #e6ffe8; }
.s-tog { border-top: 1px solid #6db36f; height: 73px; padding: 15px 0 0 18px; display: flex; font-size: 8.800px; }
.s-tog > div { width: 59px; }
.s-tog div + div + div { margin-left: -1px; }
.s-tog span { display: block; padding-left: 0; }
.tog { width: 43px; height: 19px; border-radius: 10px; background: #4fbf64; margin-top: 6px; font-size: 6px; line-height: 19px; padding-left: 8px; position: relative; font-weight: 600; }
.tog::after { content: ""; position: absolute; width: 17px; height: 17px; border-radius: 50%; background: #fff; right: 1px; top: 1px; }
.tog.off { background: #2f7030; padding-left: 23px; color: #5aa860; }
.tog.off::after { left: 1px; background: #5ad073; }
.s-foot { border-top: 1px solid #6db36f; flex: 1; display: flex; align-items: center; padding: 0 23px 2px 20px; gap: 9px; }
.burger { margin-left: auto; }

/* artwork: map */
.map { width: 742px; height: 540px; position: relative; flex: none; }
.mapsvg { overflow: hidden; }
.r-edge { stroke: #efedee; fill: #efedee; transform: translate(.5px, 1.500px); }
.r-main { stroke: #fff; fill: #fff; }
.fillr { stroke: none; }
.mlabel { font-family: Roboto, sans-serif; fill: #919193; letter-spacing: 0; }
.b1c { fill: #c7dc6a; opacity: .65; }
.b2c { fill: #b4d33c; opacity: .78; }
.b3c { fill: #a8ce2d; opacity: .85; }
.timeline { position: absolute; left: 16px; top: 463px; width: 711px; height: 62px; background: #fff; border-radius: 6px; box-shadow: 0 1px 4px rgba(0,0,0,.3); font: 9.500px/12px "Noto Sans", sans-serif; letter-spacing: 0; color: #2c8238; }
.t-top { display: flex; padding: 8px 0 0 47px; font-weight: 600; font-size: 10px; letter-spacing: .1px; }
.t-top span { flex: none; width: 336px; }
.t-mid { height: 21px; display: flex; align-items: center; padding-left: 10px; margin-top: 5px; }
.track { margin-left: 8px; }
.t-next { margin-left: 3px; }
.jahr { width: 52px; height: 17px; margin-left: 15px; border: 1px solid #23742e; border-radius: 9px; display: flex; align-items: center; padding: 0 6px 0 8px; justify-content: space-between; font-weight: 600; font-size: 10px; }
.t-bot { display: flex; padding-left: 26px; font-size: 9px; margin-top: -1px; color: #7fbfa0; }
.t-bot > * { flex: none; }
.t-bot b { color: #2c8238; width: 76px; font-weight: 600; }
.t-bot span { width: 85px; }
.t-bot :nth-child(3) { width: 82px; } .t-bot :nth-child(4) { width: 94px; } .t-bot :nth-child(5) { width: 73px; } .t-bot :nth-child(6) { width: 86px; } .t-bot :nth-child(7) { width: 74px; }

/* floating properties panel */
.props { position: absolute; left: 761px; top: 52px; width: 285px; height: 375px; background: #535353; border: 1px solid #383838; display: flex; flex-direction: column; box-shadow: 0 2px 5px rgba(0,0,0,.4); }
.ptabs { height: 29px; background: #424242; display: flex; }
.cur { background: #535353; color: #f2f2f2; }
.ptabs b { width: 91px; padding-left: 9px; font: bold 10.500px/29px "Noto Sans", sans-serif; letter-spacing: -.1px; border-right: 1px solid #3a3a3a; }
.ptools { margin-left: auto; display: flex; align-items: center; width: 41px; gap: 7px; margin-right: 0; }
.ptools span { font-size: 18px; width: 12px; margin-top: -3px; letter-spacing: 0; }
.ptools i { width: 1px; height: 11px; background: #999; }
.phead { height: 33px; display: flex; align-items: center; padding-left: 10px; border-bottom: 1px solid #434343; color: #c8c8c8; }
.phead > svg { margin: 0 7px 0 5px; color: #dcdcdc; }
.picon { width: 23px; height: 23px; background: #353535; display: grid; place-items: center; color: #ddd; }
.pbody { height: 278px; display: flex; }
.pform { width: 269px; padding: 9px 8px 0 7px; }
.prow { display: flex; align-items: center; }
.prow label { width: 48px; color: #c8c8c8; }
.prow .select { flex: 1; }
.r2 { margin-top: 9px; height: 18px; }
.r2 > svg { margin: 0 15px 0 7px; color: #ddd; }
.sl { display: flex; justify-content: space-between; align-items: center; color: #c8c8c8; height: 16px; margin-top: 15px; }
.r2 + .sl { margin-top: 11px; }
.sl .field { width: 42px; padding-left: 4px; }
.bar { width: 235px; height: 3px; margin: 4px 0 0 10px; position: relative; }
.bar svg { position: absolute; top: 3px; width: 12px; height: 11px; }
.hue { background: linear-gradient(90deg, #e8402f, #f7ee3f 17%, #6ee83a 27%, #6ee83a 38%, #5ff0e8 50%, #1b46e8 64%, #e155e8 86%, #e8403c); }
.sat { background: linear-gradient(90deg, #777, #e03c32 60%, #e03c32); }
.lum { background: linear-gradient(90deg, #111, #777 50%, #f2f2f2); }
.drops { display: flex; margin: 24px 0 0 7px; height: 17px; color: #959595; align-items: center; }
.drops svg { width: 16px; height: 16px; }
.drops div { display: flex; align-items: center; width: 18px; height: 17px; margin-left: 14px; }
.drops div + div { margin-left: 12px; }
.drops sub { margin-left: -5px; margin-top: 12px; font-size: 9px; line-height: 9px; vertical-align: baseline; }
.drops .box { margin-left: 16px; margin-right: 5px; }
.drops span { color: #dedede; }
.spec { height: 5px; width: 247px; margin: 24px 0 0 4px; background: linear-gradient(90deg, #6ef2ec, #1b46f2 12%, #3c3ff0 20%, #f055f2 33%, #ee3430 47%, #ee3430 54%, #f7f24a 66%, #6af03c 76%, #6af03c 88%, #6ef2dc); }
.sp2 { margin-top: 7px; background: linear-gradient(90deg, #6af03c, #6af03c 14%, #6ef2ec 27%, #1b46f2 38%, #3c3ff0 45%, #f055f2 58%, #ee3430 72%, #ee3430 80%, #f7f24a 93%, #8af03c); }
.pscroll { width: 14px; background: #4c4c4c; padding: 3px 2px; }
.pscroll i { height: 268px; border-radius: 5px; background: #6a6a6a; }
.pfoot { height: 26px; border-top: 1px solid #3e3e3e; display: flex; align-items: center; padding-left: 124px; color: #d8d8d8; }
.pfoot svg:nth-child(2) { margin-left: 12px; } .pfoot svg:nth-child(3) { margin-left: 13px; }
.pon { width: 27px; height: 25px; background: #3c3c3c; display: grid; place-items: center; margin: 0 10px 0 7px; }
.pgrip { flex: 1; border-top: 2px solid #404040; background: #4c4c4c; }
.pgrip .grip { margin-top: 1px; }

/* collapsed dock */
.dock { width: 38px; margin-left: 1px; background: #535353; display: flex; flex-direction: column; }
.dock .strip { padding-left: 24px; }
.dk { height: 41px; border-bottom: 1px solid #3a3a3a; display: flex; flex-direction: column; align-items: center; color: #dcdcdc; }
.dk .grip { margin-top: 4px; width: 17px; }
.dk > svg { margin-top: 7px; margin-left: 2px; }
.dk-on { width: 28px; height: 24px; background: #383838; margin-top: 4px; display: grid; place-items: center; border-radius: 2px; }

/* right panels */
.panels { width: 277px; margin-left: 2px; background: #535353; display: flex; flex-direction: column; border-right: 1px solid #3a3a3a; }
.panels > * { flex: none; }
.strip.r { text-align: right; padding-right: 5px; }
.tabs { background: #424242; display: flex; height: 28px; font: 600 10.500px/28px "Noto Sans", sans-serif; color: #a8a8a8; letter-spacing: -.15px; }
.tabs b { padding-left: 9px; border-right: 1px solid #3a3a3a; font-weight: 600; }
.tabs svg { width: 10px; height: 8px; margin: 9px 5px 0 auto; color: #bbb; }
.t-farbe b:nth-child(1) { width: 47px; } .t-farbe b:nth-child(2) { width: 72px; }
.t-korr b:nth-child(1) { width: 83px; } .t-korr b:nth-child(2) { width: 81px; }
.t-eb b:nth-child(1) { width: 55px; letter-spacing: 0; } .t-eb b:nth-child(2) { width: 54px; } .t-eb b:nth-child(3) { width: 48px; }
.t-korr, .t-eb { border-top: 2px solid #383838; height: 30px; }
.farbe { height: 226px; padding: 8px 0 0 8px; }
.frow { display: flex; height: 69px; }
.k { margin: 24px 0 0 6px; width: 13px; font-size: 9.500px; color: #bbb; }
.kbar { width: 139px; height: 6px; margin-top: 22px; background: linear-gradient(90deg, #f8f8f8, #111); position: relative; }
.kbar svg { position: absolute; left: -5px; top: 6px; width: 12px; height: 12px; }
.frow .field { width: 37px; margin: 24px 1px 0 6px; }
.pc { margin-top: 24px; font-size: 9.500px; color: #bbb; }
.spectrum { display: flex; height: 140px; width: 254px; }
.spectrum i { width: 246px; background: linear-gradient(180deg, #fff 0, rgba(255,255,255,.6) 18%, rgba(255,255,255,0) 48%, rgba(0,0,0,0) 50%, rgba(0,0,0,.65) 80%, #000 100%), linear-gradient(90deg, #e61e28, #f08a22 8%, #f4e628 16%, #2ea53c 29%, #20a4a8 39%, #2098dc 48%, #2b55b8 57%, #4a3aa0 65%, #c02f90 76%, #e22b78 86%, #e3202c 100%); }
.spectrum u { width: 8px; background: linear-gradient(#fff 50%, #000 50%); }
.korr { height: 179px; padding: 4px 8px 0; }
.korr p { margin: 0; color: #c8c8c8; }
.kr { display: flex; gap: 8px; color: #dcdcdc; margin-top: 11px; height: 16px; }
.kr svg { width: 16px; height: 16px; }
.k1 { margin-top: 5px; margin-left: 39px; } .k2 { margin-left: 28px; } .k3 { margin-left: 40px; }
.l-filter { height: 32px; border-bottom: 1px solid #434343; display: flex; align-items: center; padding: 4px 4px 0 4px; color: #dcdcdc; }
.art-s { width: 91px; height: 18px; }
.select .mg { width: 11px; height: 11px; margin: 0 3px 0 0; }
.l-filter .select, .l-mode .select { border-color: #4d4d4d; }
.l-ic { display: flex; gap: 12px; margin-left: 31px; }
.l-ic svg { width: 12.300px; height: 12px; }
.sw { width: 9px; height: 16px; border-radius: 5px; background: radial-gradient(circle at 4.500px 4.500px, #ddd 4px, #383838 4.600px); margin-left: auto; margin-top: -2px; margin-right: -1px; }
.l-mode { height: 28px; display: flex; align-items: center; padding-left: 4px; border-bottom: 1px solid #434343; }
.nm { width: 158px; padding-left: 6px; }
.dk1 { margin-left: 4px; width: 52px; color: #c8c8c8; }
.combo { height: 18px; width: 55px; background: #454545; border: 1px solid #666; display: flex; align-items: center; padding-left: 2px; color: #dedede; }
.combo span { width: 36px; }
.combo u { border-left: 1px solid #666; padding-left: 3px; height: 16px; display: grid; place-items: center; }
.combo svg { width: 8px; height: 8px; }
.l-fix { height: 30px; display: flex; align-items: center; padding: 0 0 2px 5px; }
.fx { width: 46px; color: #c8c8c8; }
.l-lk { display: flex; gap: 10px; color: #dcdcdc; width: 130px; align-items: center; }
.l-lk svg { width: 12.300px; height: 12px; }
.dim { color: #8c8c8c; }
.fl { width: 37px; color: #c8c8c8; }
.layers { height: 200px; display: flex; background: #4b4b4b; }
.list { width: 262px; }
.layer { display: flex; height: 28px; border-bottom: 1px solid #464646; background: #535353; }
.eye { width: 30px; display: grid; place-items: center; border-right: 1px solid #464646; color: #dcdcdc; }
.lr { flex: 1; display: flex; align-items: center; color: #dedede; }
.lr.sel { background: #6a6a6a; }
.hf { width: 12px; height: 12px; margin-left: 14px; }
.lnk { width: 8px; height: 14px; margin-left: 12px; }
.mk { width: 36px; height: 22px; margin: 0 6px 0 3px; }
.tn { width: 32px; height: 18px; margin: 0 9px 0 3px; }
.lscroll { flex: 1; background: #505050; border-left: 1px solid #464646; }
.l-foot { flex: 1 !important; border-top: 1px solid #3a3a3a; border-bottom: 2px solid #333; display: flex; align-items: center; padding-left: 75px; padding-bottom: 1px; gap: 13px; color: #dcdcdc; }
.l-foot svg { width: 14px; height: 13px; }
.l-foot em { font: italic 600 12px "Noto Sans", sans-serif; width: 14px; white-space: nowrap; letter-spacing: -.3px; }
.l-foot sub { line-height: 0; }
```
